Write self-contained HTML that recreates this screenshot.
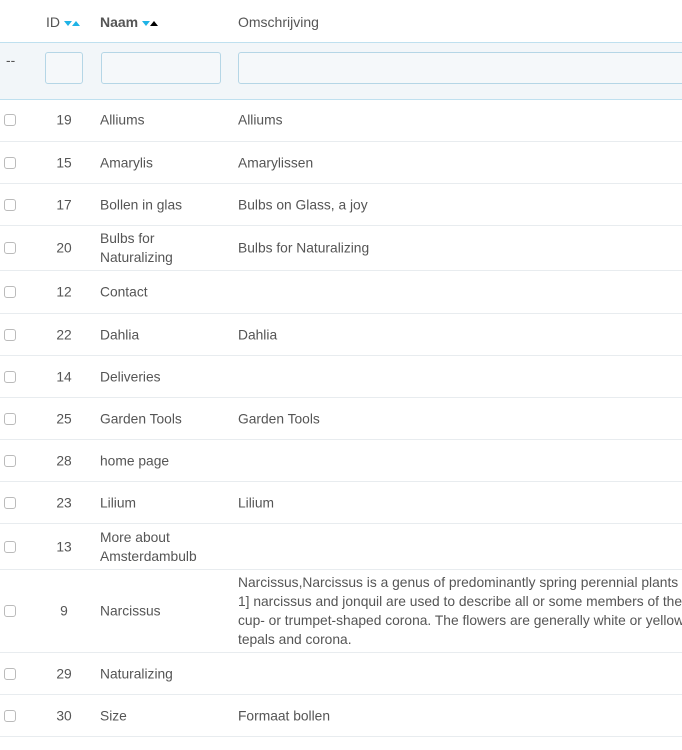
<!DOCTYPE html>
<html><head><style>
body{margin:0;width:682px;height:750px;overflow:hidden;background:#fff;font-family:"Liberation Sans",sans-serif;font-size:13.8px;color:#555;position:relative}
.h{position:absolute;top:14px;font-size:14px;color:#555}
.f{position:absolute;top:42px;left:0;width:682px;height:56px;background:#f2f6f9;border-top:1px solid #bfe0ef;border-bottom:1px solid #bfe0ef}
.in{position:absolute;top:9px;height:32px;border:1px solid #b5d6e6;border-radius:3px;background:#f5f8fa;box-sizing:border-box}
.r{position:absolute;left:0;width:682px;border-bottom:1px solid #e8ecef;box-sizing:border-box}
.r div{position:absolute;top:50%;transform:translateY(-50%);line-height:19px}
.cb{left:4px;width:12px;height:12px;border:1px solid #bbb;border-radius:3px;box-sizing:border-box}
.id{left:48px;width:32px;text-align:center}
.n{left:100px;width:130px}
.d{left:238px;white-space:nowrap}
.tri{display:inline-block;width:0;height:0;border-left:4px solid transparent;border-right:4px solid transparent;vertical-align:middle}
.dn{border-top:5px solid #1fb3e6}.up{border-bottom:5px solid #1fb3e6}.upk{border-bottom:5px solid #000}
</style></head><body>
<div class="h" style="left:46px">ID <span class="tri dn"></span><span class="tri up"></span></div>
<div class="h" style="left:100px;font-weight:bold">Naam <span class="tri dn"></span><span class="tri upk"></span></div>
<div class="h" style="left:238px">Omschrijving</div>
<div class="f"><span style="position:absolute;left:6px;top:10px">--</span>
<div class="in" style="left:45px;width:38px"></div>
<div class="in" style="left:101px;width:120px"></div>
<div class="in" style="left:238px;width:460px"></div></div>
<div class="r" style="top:99px;height:43px"><div class="cb"></div><div class="id">19</div><div class="n">Alliums</div><div class="d">Alliums</div></div>
<div class="r" style="top:142px;height:42px"><div class="cb"></div><div class="id">15</div><div class="n">Amarylis</div><div class="d">Amarylissen</div></div>
<div class="r" style="top:184px;height:42px"><div class="cb"></div><div class="id">17</div><div class="n">Bollen in glas</div><div class="d">Bulbs on Glass, a joy</div></div>
<div class="r" style="top:226px;height:45px"><div class="cb"></div><div class="id">20</div><div class="n">Bulbs for<br>Naturalizing</div><div class="d">Bulbs for Naturalizing</div></div>
<div class="r" style="top:271px;height:43px"><div class="cb"></div><div class="id">12</div><div class="n">Contact</div></div>
<div class="r" style="top:314px;height:42px"><div class="cb"></div><div class="id">22</div><div class="n">Dahlia</div><div class="d">Dahlia</div></div>
<div class="r" style="top:356px;height:42px"><div class="cb"></div><div class="id">14</div><div class="n">Deliveries</div></div>
<div class="r" style="top:398px;height:42px"><div class="cb"></div><div class="id">25</div><div class="n">Garden Tools</div><div class="d">Garden Tools</div></div>
<div class="r" style="top:440px;height:42px"><div class="cb"></div><div class="id">28</div><div class="n">home page</div></div>
<div class="r" style="top:482px;height:42px"><div class="cb"></div><div class="id">23</div><div class="n">Lilium</div><div class="d">Lilium</div></div>
<div class="r" style="top:524px;height:46px"><div class="cb"></div><div class="id">13</div><div class="n">More about<br>Amsterdambulb</div></div>
<div class="r" style="top:570px;height:83px"><div class="cb"></div><div class="id">9</div><div class="n">Narcissus</div><div class="d">Narcissus,Narcissus is a genus of predominantly spring perennial plants<br>1] narcissus and jonquil are used to describe all or some members of the<br>cup- or trumpet-shaped corona. The flowers are generally white or yellow<br>tepals and corona.</div></div>
<div class="r" style="top:653px;height:42px"><div class="cb"></div><div class="id">29</div><div class="n">Naturalizing</div></div>
<div class="r" style="top:695px;height:42px"><div class="cb"></div><div class="id">30</div><div class="n">Size</div><div class="d">Formaat bollen</div></div>
</body></html>
